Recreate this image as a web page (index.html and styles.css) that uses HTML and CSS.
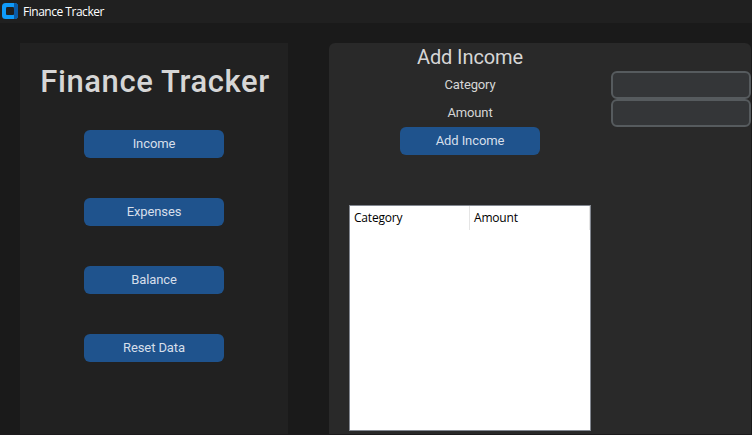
FILE: index.html
```html
<!DOCTYPE html>
<html lang="en">
<head>
<meta charset="utf-8">
<title>Finance Tracker</title>
<link rel="stylesheet" href="styles.css">
</head>
<body>
<header class="titlebar">
  <svg class="app-icon" width="16" height="16" viewBox="0 0 16 16">
    <rect width="16" height="16" rx="3.5" fill="#0f9bfa"/>
    <path d="M12 0h.5A3.500 3.500 0 0 1 16 3.500v9a3.500 3.500 0 0 1-3.500 3.500H12z" fill="#0a5ba8"/>
    <rect x="4" y="4" width="9" height="8" rx="1" fill="#0a5ba8"/>
    <rect x="4" y="4" width="8" height="8" rx="1.500" fill="#202020"/>
  </svg>
  <span class="titlebar-text">Finance Tracker</span>
</header>
<div class="window">
  <nav class="sidebar">
    <h1 class="brand">Finance Tracker</h1>
    <button class="btn">Income</button>
    <button class="btn">Expenses</button>
    <button class="btn">Balance</button>
    <button class="btn">Reset Data</button>
  </nav>
  <main class="panel">
    <form class="form">
      <h2 class="heading">Add Income</h2>
      <label class="label" for="category">Category</label>
      <input class="entry" id="category" type="text">
      <label class="label" for="amount">Amount</label>
      <input class="entry" id="amount" type="text">
      <button class="btn" type="button">Add Income</button>
    </form>
    <div class="tree">
      <div class="tree-head">
        <div class="tree-col">Category</div>
        <div class="tree-col">Amount</div>
      </div>
    </div>
  </main>
</div>
</body>
</html>
```
FILE: styles.css
```css
* { box-sizing: border-box; }

body {
  margin: 0;
  height: 435px;
  overflow: hidden;
  display: flex;
  flex-direction: column;
  background: #1a1a1a;
  border-bottom: 1px solid #1c1a1c;
  color: #dce4ee;
  font: 13px/28px Roboto, sans-serif;
}

.titlebar {
  flex: none;
  height: 23px;
  display: flex;
  align-items: flex-start;
  padding: 3px 0 0 2px;
  gap: 5px;
  background: #202020;
  color: #fff;
  font: 12px/17px "Open Sans", sans-serif;
}

.app-icon { display: block; }
.titlebar-text { letter-spacing: -0.48px; }

.window {
  flex: 1;
  min-height: 0;
  display: flex;
  gap: 41px;
  padding: 20px 1px 0 20px;
}

.sidebar {
  width: 268px;
  flex: none;
  display: flex;
  flex-direction: column;
  align-items: center;
  gap: 40px;
  padding-top: 20px;
  background: #212121;
}

.brand {
  margin: 0 0 -13px 2px;
  height: 40px;
  color: #d6d6d6;
  font-size: 31px;
  font-weight: 500;
  line-height: 37px;
  letter-spacing: 0.6px;
  white-space: nowrap;
}

.btn {
  flex: none;
  width: 140px;
  height: 28px;
  padding: 0;
  border: 0;
  border-radius: 6px;
  background: #1f538d;
  color: #d6dfea;
  font: 13px/28px Roboto, sans-serif;
  letter-spacing: -0.1px;
}

.panel {
  flex: 1;
  background: #292929;
  border-radius: 6px 6px 0 0;
}

.form {
  display: grid;
  grid-template-columns: 282px 140px;
  grid-template-rows: repeat(4, 28px);
  justify-items: center;
}

.heading {
  grid-column: 1;
  margin: 0;
  color: #d6d6d6;
  font-size: 20px;
  font-weight: 400;
  letter-spacing: -0.1px;
}

.label {
  grid-column: 1;
  color: #d6d6d6;
  letter-spacing: -0.15px;
}

.entry {
  grid-column: 2;
  width: 140px;
  height: 28px;
  padding: 0 6px;
  border: 2px solid #565b5e;
  border-radius: 6px;
  background: #343638;
  color: #dce4ee;
  font: inherit;
}

.form .btn { grid-column: 1; }

.tree {
  width: 242px;
  height: 226px;
  margin: 50px 0 0 20px;
  border: 1px solid #828790;
  background: #fff;
  color: #000;
  font: 12px/24px "Open Sans", sans-serif;
  letter-spacing: -0.2px;
}

.tree-head { display: flex; }

.tree-col {
  width: 120px;
  height: 24px;
  padding-left: 4px;
  border-right: 1px solid #e5e5e5;
}
```
